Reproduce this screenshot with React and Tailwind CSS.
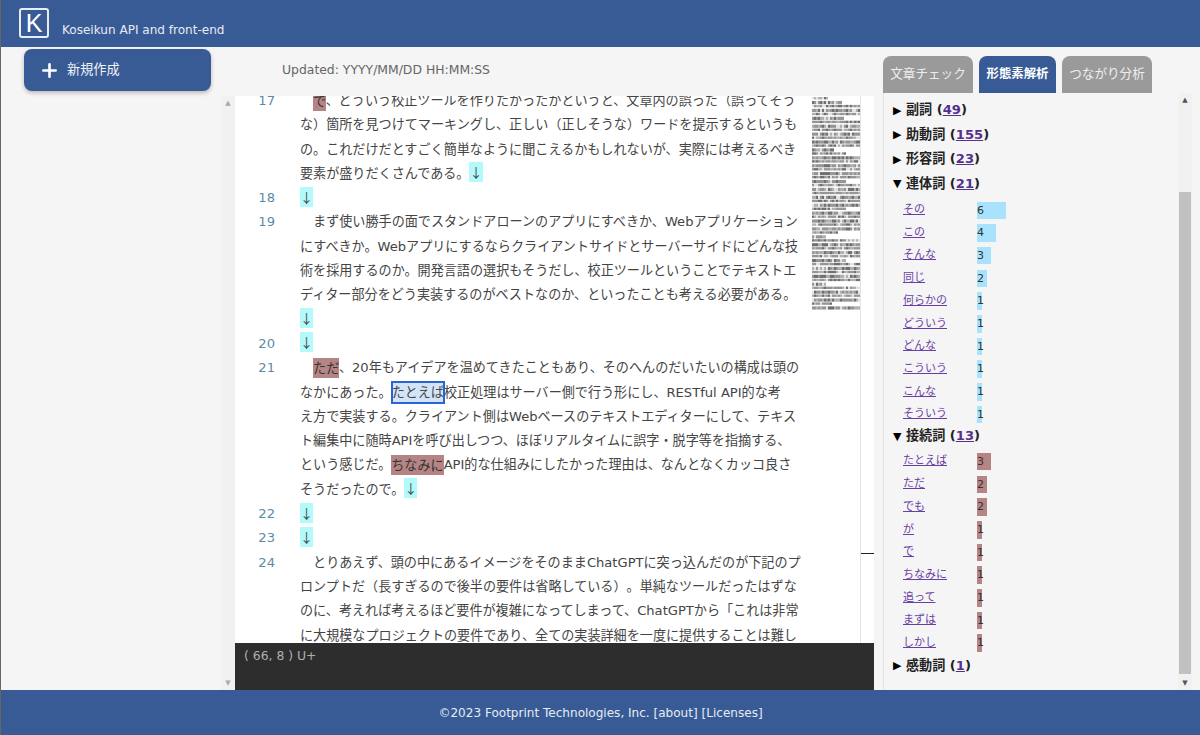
import { Plus } from 'lucide-react';

const Hl = ({ children }) => <span className="bg-[#b58484] py-[2.5px] text-[#333]">{children}</span>;
const Ret = () => <span className="bg-[#b2fafc] py-[0.5px] leading-none font-['Noto_Sans_CJK_JP',sans-serif]">↓</span>;

const editorLines = [
  { no: 17, rows: [
    <>　<Hl>で</Hl>、どういう校正ツールを作りたかったかというと、文章内の誤った（誤ってそう</>,
    'な）箇所を見つけてマーキングし、正しい（正しそうな）ワードを提示するというも',
    'の。これだけだとすごく簡単なように聞こえるかもしれないが、実際には考えるべき',
    <>要素が盛りだくさんである。<Ret /></>,
  ] },
  { no: 18, rows: [<Ret />] },
  { no: 19, rows: [
    '　まず使い勝手の面でスタンドアローンのアプリにすべきか、Webアプリケーション',
    'にすべきか。Webアプリにするならクライアントサイドとサーバーサイドにどんな技',
    '術を採用するのか。開発言語の選択もそうだし、校正ツールということでテキストエ',
    'ディター部分をどう実装するのがベストなのか、といったことも考える必要がある。',
    <Ret />,
  ] },
  { no: 20, rows: [<Ret />] },
  { no: 21, rows: [
    <>　<Hl>ただ</Hl>、20年もアイデアを温めてきたこともあり、そのへんのだいたいの構成は頭の</>,
    <>なかにあった。<span className="bg-[#d3e3f8] outline-2 -outline-offset-1 outline-[#2a62d8] py-[3px]">たとえば</span>校正処理はサーバー側で行う形にし、RESTful API的な考</>,
    'え方で実装する。クライアント側はWebベースのテキストエディターにして、テキス',
    'ト編集中に随時APIを呼び出しつつ、ほぼリアルタイムに誤字・脱字等を指摘する、',
    <>という感じだ。<Hl>ちなみに</Hl>API的な仕組みにしたかった理由は、なんとなくカッコ良さ</>,
    <>そうだったので。<Ret /></>,
  ] },
  { no: 22, rows: [<Ret />] },
  { no: 23, rows: [<Ret />] },
  { no: 24, rows: [
    '　とりあえず、頭の中にあるイメージをそのままChatGPTに突っ込んだのが下記のプ',
    'ロンプトだ（長すぎるので後半の要件は省略している）。単純なツールだったはずな',
    'のに、考えれば考えるほど要件が複雑になってしまって、ChatGPTから「これは非常',
    'に大規模なプロジェクトの要件であり、全ての実装詳細を一度に提供することは難し',
  ] },
];

const rentai = [['その', 6], ['この', 4], ['そんな', 3], ['同じ', 2], ['何らかの', 1], ['どういう', 1], ['どんな', 1], ['こういう', 1], ['こんな', 1], ['そういう', 1]];
const setsuzoku = [['たとえば', 3], ['ただ', 2], ['でも', 2], ['が', 1], ['で', 1], ['ちなみに', 1], ['追って', 1], ['まずは', 1], ['しかし', 1]];

// tiny page thumbnail: blurry grey text rows, short row = end of a paragraph
const shortRows = [0, 1, 5, 13, 14, 21, 28, 34, 35, 41, 47, 52];
const noise = (a, b) => {
  const v = Math.sin(a * 12.9898 + b * 78.233) * 43758.5453;
  return v - Math.floor(v);
};

const Minimap = () => (
  <svg width="48" height="214" viewBox="0 0 48 214" className="shrink-0">
    {Array.from({ length: 54 }, (_, row) => {
      const end = shortRows.includes(row) ? 10 + noise(row, 1) * 26 : 48;
      return Array.from({ length: 24 }, (_, col) => {
        const x = col * 2;
        if (x >= end) return null;
        const dark = noise(row, col);
        const fill = dark > 0.8 ? '#707070' : dark > 0.4 ? '#969696' : dark > 0.12 ? '#b0b0b0' : '#e2e2e2';
        return <rect key={`${row}-${col}`} x={x} y={row * 3.95 + 1} width="2" height={row % 2 ? 3.2 : 2.4} fill={fill} />;
      });
    })}
  </svg>
);

const Heading = ({ open, name, count }) => (
  <div className="flex items-center h-[24.5px] text-[13.1px] font-bold text-[#222]">
    <span className="w-[13px] text-[11px] leading-none text-black">{open ? '▼' : '▶'}</span>
    <span>{name} (<a className="underline text-[#55308f]">{count}</a>)</span>
  </div>
);

const WordRow = ({ word, n, bar }) => (
  <div className="flex items-center h-[22.7px]">
    <a className="w-[84px] pl-[10px] text-[11px] underline text-[#6a3fa5]">{word}</a>
    <div className={`h-[17.5px] text-[11px] leading-[17.5px] text-[#333] ${bar}`} style={{ width: n * 4.8 }}>{n}</div>
  </div>
);

const ScrollBar = ({ thumb }) => (
  <div className={`w-[14px] shrink-0 flex flex-col items-center bg-[#f1f1f1] ${thumb ? 'text-[#555]' : 'text-[#aaa]'}`}>
    <div className="h-[14px] flex items-center text-[7px] leading-none">▲</div>
    <div className="flex-1 w-full flex flex-col">
      {thumb && <div className="flex-1 mt-[85px] mb-[2px] mx-[1px] bg-[#c1c1c1]" />}
    </div>
    <div className="h-[14px] flex items-center text-[7px] leading-none">▼</div>
  </div>
);

export default function App() {
  return (
    <div className="w-[1200px] h-[735px] flex flex-col overflow-hidden bg-[#f5f5f5] border-l border-[#666] [text-spacing-trim:space-all] font-['DejaVu_Sans','Noto_Sans_CJK_JP',sans-serif]">
      <header className="h-[47px] shrink-0 bg-[#385b95] flex items-center pl-[18px] text-white">
        <div className="w-[30px] h-[30px] -mt-[1px] border-2 border-[#e8ecf4] rounded-[3px] flex items-center justify-center text-[25px] leading-none font-['Liberation_Sans',sans-serif]">K</div>
        <span className="ml-[13px] mt-[14px] text-[12.05px] text-[#e6ebf3]">Koseikun API and front-end</span>
      </header>

      <div className="flex-1 flex min-h-0">
        <aside className="w-[220px] shrink-0 flex flex-col">
          <button className="ml-[23px] mt-[2px] w-[187px] h-[42px] bg-[#385b95] rounded-[8px] shadow-[0_2px_4px_rgba(0,0,0,0.25)] flex items-center pl-[15px] text-[#f0f3f8] text-[13.2px]">
            <Plus size={21} strokeWidth={3} className="text-white" />
            <span className="ml-[7px]">新規作成</span>
          </button>
        </aside>

        <main className="w-[653px] shrink-0 flex flex-col min-h-0">
          <div className="h-[49px] shrink-0 pl-[61px] pt-[14px] text-[12.4px] text-[#666]">Updated: YYYY/MM/DD HH:MM:SS</div>
          <div className="flex-1 flex min-h-0">
            <ScrollBar />
            <div className="flex-1 flex flex-col min-w-0">
              <div className="flex-1 flex min-h-0 bg-white">
                <div className="flex-1 overflow-hidden min-w-0">
                  <div className="-mt-[7px] text-[13.1px] leading-[24.3px] text-[#444]">
                    {editorLines.map((line) => (
                      <div key={line.no} className="flex">
                        <div className="w-[40px] h-[24.3px] shrink-0 text-right text-[#5c8aa8]">{line.no}</div>
                        <div className="ml-[25px] whitespace-nowrap">
                          {line.rows.map((row, i) => <div key={i} className="h-[24.3px]">{row}</div>)}
                        </div>
                      </div>
                    ))}
                  </div>
                </div>
                <div className="w-[48px] shrink-0"><Minimap /></div>
                <div className="w-[14px] shrink-0 border-l border-[#e3e3e3] flex flex-col">
                  <div className="mt-[457px] h-[1px] bg-[#222]" />
                </div>
              </div>
              <div className="h-[47px] shrink-0 bg-[#2d2d2d] text-[#b0b0b0] text-[12.4px] px-[9px] pt-[4px]">( 66, 8 ) U+</div>
            </div>
          </div>
        </main>

        <section className="flex-1 flex flex-col min-w-0 pl-[9px]">
          <div className="h-[46px] shrink-0 flex items-end gap-[6px] text-[12.6px] font-bold">
            <div className="w-[90px] h-[37px] rounded-t-[8px] bg-[#9a9a9a] text-[#eee] flex items-center justify-center font-normal">文章チェック</div>
            <div className="w-[77px] h-[37px] rounded-t-[8px] bg-[#385b95] text-white text-[12.4px] flex items-center justify-center">形態素解析</div>
            <div className="w-[90px] h-[37px] rounded-t-[8px] bg-[#9a9a9a] text-[#eee] flex items-center justify-center font-normal">つながり分析</div>
          </div>
          <div className="flex-1 flex min-h-0 border-l border-[#e3e3e3]">
            <div className="flex-1 overflow-hidden pl-[9px] pt-[5px]">
              <Heading name="副詞" count="49" />
              <Heading name="助動詞" count="155" />
              <Heading name="形容詞" count="23" />
              <Heading open name="連体詞" count="21" />
              <div className="mt-[3px] -mb-[2px]">
                {rentai.map(([w, n]) => <WordRow key={w} word={w} n={n} bar="bg-[#a8e2fd]" />)}
              </div>
              <Heading open name="接続詞" count="13" />
              <div className="mt-[2px] -mb-[1px]">
                {setsuzoku.map(([w, n]) => <WordRow key={w} word={w} n={n} bar="bg-[#b58484]" />)}
              </div>
              <Heading name="感動詞" count="1" />
            </div>
            <ScrollBar thumb />
            <div className="w-[8px] shrink-0" />
          </div>
        </section>
      </div>

      <footer className="h-[45px] shrink-0 bg-[#385b95] flex items-center justify-center pt-[1px] text-[12.05px] text-[#e6ebf3]">
        ©2023 Footprint Technologies, Inc. [about] [Licenses]
      </footer>
    </div>
  );
}
